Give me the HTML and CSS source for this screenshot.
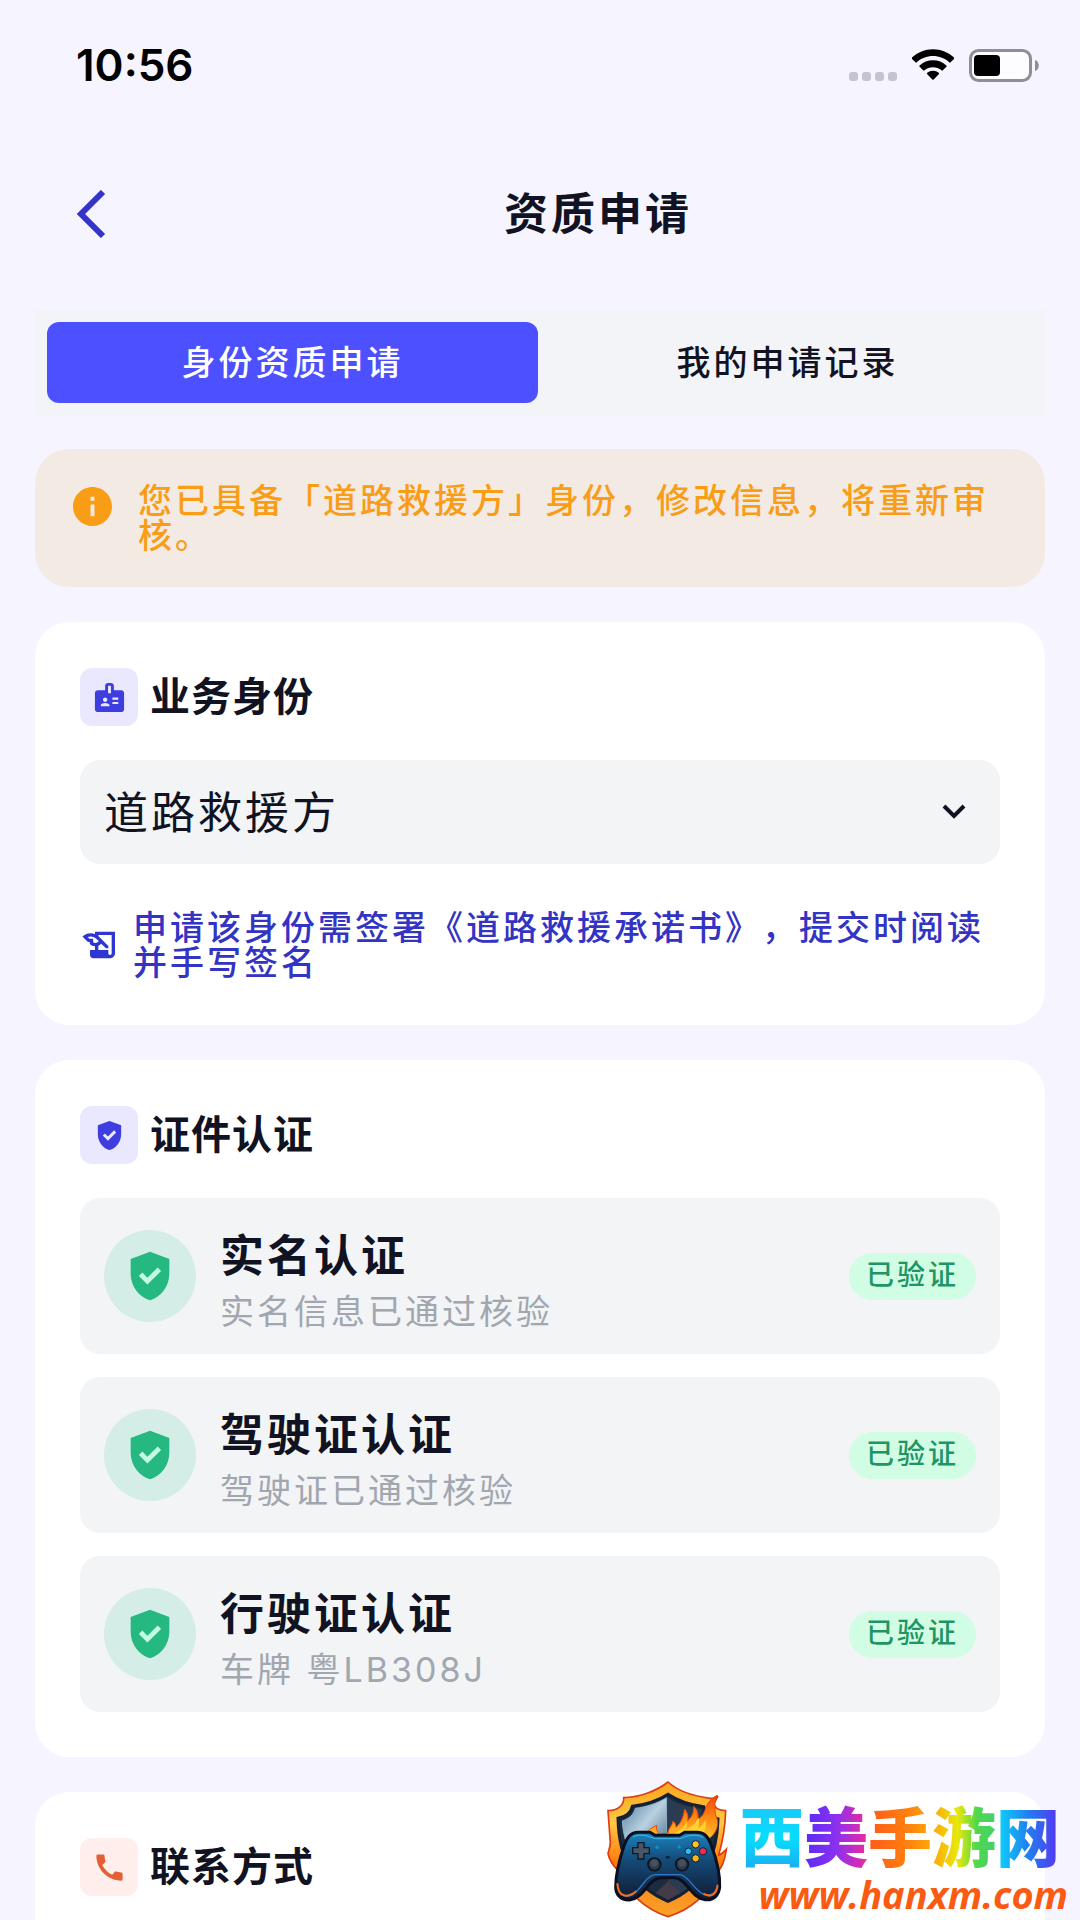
FILE: index.html
```html
<!DOCTYPE html>
<html lang="zh-CN">
<head>
	<meta charset="utf-8">
	<meta name="viewport" content="width=device-width, initial-scale=1.0">
	<title>资质申请</title>
	<link rel="stylesheet" href="styles.css">
</head>

<body>
<svg class="sprite" aria-hidden="true">
	<symbol id="icon-shield" viewBox="0 0 24 24">
		<path d="M12 2 4 5v6.09c0 5.05 3.41 9.76 8 10.91 4.59-1.15 8-5.86 8-10.91V5l-8-3zm-1.06 13.54L7.4 12l1.41-1.41 2.12 2.12 4.24-4.24 1.41 1.41-5.64 5.66z"/>
	</symbol>
</svg>
<div class="wrapper">
	<div class="status_bar">
		<span class="time">10:56</span>
		<div class="status_icons">
			<span class="signal"><i></i><i></i><i></i><i></i></span>
			<svg class="wifi" viewBox="0 0 44 33">
				<path d="M22 0C13.500 0 5.800 3.300 0 8.700a1 1 0 0 0 0 1.400l3.600 3.600a1 1 0 0 0 1.400 0C9.500 9.600 15.500 7.200 22 7.200s12.500 2.400 17 6.500a1 1 0 0 0 1.400 0l3.600-3.600a1 1 0 0 0 0-1.400C38.200 3.300 30.500 0 22 0z"/>
				<path d="M22 11.500c-5.400 0-10.300 2-14 5.400a1 1 0 0 0 0 1.500l3.700 3.700a1 1 0 0 0 1.400 0c2.400-2.100 5.500-3.300 8.900-3.300s6.500 1.200 8.900 3.300a1 1 0 0 0 1.400 0l3.700-3.700a1 1 0 0 0 0-1.500c-3.700-3.400-8.600-5.400-14-5.400z"/>
				<path d="M22 22.500c-2.300 0-4.400.8-6 2.200a1 1 0 0 0 0 1.500l5.300 5.400a1 1 0 0 0 1.400 0l5.300-5.400a1 1 0 0 0 0-1.500c-1.600-1.400-3.700-2.200-6-2.200z"/>
			</svg>
			<svg class="battery" viewBox="0 0 70 33">
				<rect x="1.500" y="1.500" width="60" height="30" rx="8" fill="#fdfdff" stroke="#8f8d97" stroke-width="3"/>
				<rect x="5" y="6" width="26" height="21" rx="4"/>
				<path d="M66 11c5 1 5 10 0 11z" fill="#8f8d97"/>
			</svg>
		</div>
	</div>

	<header class="nav">
		<button type="button" class="back" aria-label="返回">
			<svg viewBox="0 0 30 48"><path d="M27 2 5 24l22 22"/></svg>
		</button>
		<h1>资质申请</h1>
	</header>

	<div class="tabs">
		<button type="button" class="tab on">身份资质申请</button>
		<button type="button" class="tab">我的申请记录</button>
	</div>

	<main class="content">
		<div class="notice">
			<svg viewBox="2 2 20 20"><path d="M12 2C6.480 2 2 6.480 2 12s4.480 10 10 10 10-4.480 10-10S17.520 2 12 2zm1 15h-2v-6h2v6zm0-8h-2V7h2v2z"/></svg>
			<p>您已具备「道路救援方」身份，修改信息，将重新审核。</p>
		</div>

		<section class="card">
			<div class="card_head">
				<span class="card_icon">
					<svg viewBox="0 0 24 24"><path d="M20 7h-5V4c0-1.100-.9-2-2-2h-2c-1.100 0-2 .9-2 2v3H4c-1.100 0-2 .9-2 2v11c0 1.100.9 2 2 2h16c1.100 0 2-.9 2-2V9c0-1.100-.9-2-2-2zM9 12c.83 0 1.500.67 1.500 1.500S9.830 15 9 15s-1.500-.67-1.500-1.500S8.170 12 9 12zm3 6H6v-.75c0-1 2-1.500 3-1.500s3 .5 3 1.500V18zm1-9h-2V4h2v5zm5 7.500h-4V15h4v1.500zm0-3h-4V12h4v1.500z"/></svg>
				</span>
				<h2><label for="identity">业务身份</label></h2>
			</div>
			<div class="select_box">
				<select id="identity">
					<option>道路救援方</option>
				</select>
				<svg viewBox="0 0 24 16"><path d="M2 3l10 10L22 3"/></svg>
			</div>
			<a href="#" class="terms">
				<svg viewBox="0 0 24 24"><path d="M9 4v1.380c-.83-.33-1.720-.5-2.610-.5-1.790 0-3.580.68-4.950 2.050l3.330 3.330h1.110v1.110c.86.86 1.980 1.310 3.110 1.360V15H6v3c0 1.100.9 2 2 2h10c1.660 0 3-1.340 3-3V4H9zm-1.110 6.410V8.260H5.610L4.570 7.220a5.070 5.070 0 0 1 1.820-.34c1.340 0 2.590.52 3.540 1.460l1.410 1.410-.2.2a2.700 2.700 0 0 1-1.920.8c-.47 0-.93-.12-1.330-.34zM19 17c0 .55-.45 1-1 1s-1-.45-1-1v-2h-6v-2.590c.57-.23 1.100-.57 1.560-1.030l.2-.2L15.590 14H17v-1.410l-6-5.970V6h8v11z"/></svg>
				<span>申请该身份需签署《道路救援承诺书》，提交时阅读并手写签名</span>
			</a>
		</section>

		<section class="card">
			<div class="card_head">
				<span class="card_icon"><svg><use href="#icon-shield"/></svg></span>
				<h2>证件认证</h2>
			</div>
			<ul class="cert_list">
				<li>
					<span class="cert_icon"><svg><use href="#icon-shield"/></svg></span>
					<div class="cert_text">
						<h3>实名认证</h3>
						<p>实名信息已通过核验</p>
					</div>
					<span class="badge">已验证</span>
				</li>
				<li>
					<span class="cert_icon"><svg><use href="#icon-shield"/></svg></span>
					<div class="cert_text">
						<h3>驾驶证认证</h3>
						<p>驾驶证已通过核验</p>
					</div>
					<span class="badge">已验证</span>
				</li>
				<li>
					<span class="cert_icon"><svg><use href="#icon-shield"/></svg></span>
					<div class="cert_text">
						<h3>行驶证认证</h3>
						<p>车牌 粤LB308J</p>
					</div>
					<span class="badge">已验证</span>
				</li>
			</ul>
		</section>

		<section class="card contact">
			<div class="card_head">
				<span class="card_icon phone">
					<svg viewBox="0 0 24 24"><path d="M20.010 15.380c-1.230 0-2.420-.2-3.530-.56-.35-.12-.74-.03-1.010.24l-1.570 1.970c-2.830-1.350-5.480-3.900-6.890-6.830l1.950-1.660c.27-.28.35-.67.24-1.020-.37-1.110-.56-2.300-.56-3.530 0-.54-.45-.99-.99-.99H4.190C3.650 3 3 3.240 3 3.990 3 13.280 10.730 21 20.010 21c.71 0 .99-.63.99-1.180v-3.450c0-.54-.45-.99-.99-.99z"/></svg>
				</span>
				<h2>联系方式</h2>
			</div>
		</section>
	</main>

	<div class="site_mark">
		<svg viewBox="0 0 450 450">
			<defs>
				<linearGradient id="gold" x1="0" y1="0" x2="0" y2="1">
					<stop offset="0" stop-color="#f9a61c"/>
					<stop offset=".3" stop-color="#ffc845"/>
					<stop offset=".6" stop-color="#ff7a0d"/>
					<stop offset="1" stop-color="#f9a22b"/>
				</linearGradient>
				<linearGradient id="steel" x1="0" y1="0" x2="1" y2="1">
					<stop offset="0" stop-color="#4f7797"/>
					<stop offset=".5" stop-color="#b9d2e2"/>
					<stop offset="1" stop-color="#48657c"/>
				</linearGradient>
				<linearGradient id="fire" x1="0" y1="0" x2="0" y2="1">
					<stop offset="0" stop-color="#f0460c"/>
					<stop offset=".5" stop-color="#ff8a13"/>
					<stop offset="1" stop-color="#ffd034"/>
				</linearGradient>
				<linearGradient id="pad" x1="0" y1="0" x2="0" y2="1">
					<stop offset="0" stop-color="#1b84bf"/>
					<stop offset=".4" stop-color="#144b78"/>
					<stop offset="1" stop-color="#111b31"/>
				</linearGradient>
			</defs>
			<!-- shield -->
			<path d="M234 36C202 62 148 82 101 83c2 22-17 38-47 39l7 95c-1 17-5 25-7 34 4 22 16 37 32 53 25 62 76 113 148 136 71-22 121-70 147-132 16-16 24-38 28-70-9 10-16 15-23 18 12-43 20-92 21-134-20-1-34-9-35-22l12-22c-7 5-15 8-22 7-47-6-98-21-128-49z" fill="url(#gold)" stroke="#df3c12" stroke-width="5"/>
			<path d="M234 73c-31 20-65 31-107 36-4 18-20 32-43 36 2 112 44 206 150 249 104-42 148-136 150-247-22-6-38-18-43-37-43-5-77-17-107-37z" fill="#1c2b3f" stroke="#152033" stroke-width="9"/>
			<path d="M230 83c-29 17-58 27-94 32-5 19-18 31-39 38 2 36 10 64 22 92h111z" fill="url(#steel)" stroke="#8fb5cf" stroke-width="3"/>
			<path d="M234 84v305c44-18 82-48 104-88l-4-184c-40-5-71-15-100-33z" fill="#2c3c50"/>
			<path d="m234 334-37 35 37 20 36-20z" fill="#443b49"/>
			<!-- flames -->
			<path d="M170 196c5-19 16-24 31-30-5 13 2 17 6 28l27-5c1-15 12-20 15-35 7 5 9 11 9 18 15-13 21-27 26-55 9 12 12 22 9 35 13-11 19-24 18-43 12 11 14 23 13 38 12-5 20-19 23-34 7-18 18-27 34-37-10 20-5 29-6 46-1 15 9 22 8 38-1 26-20 47-47 57l-28-24z" fill="url(#fire)" stroke="#e94a0c" stroke-width="3"/>
			<path d="M251 192c16-8 30-18 39-36 3 10 0 17-3 23 18-8 31-21 38-36 6 10-2 23 1 31 10-6 13-12 20-25 5 19-1 39-15 52z" fill="#ffd233"/>
			<!-- gamepad -->
			<path d="M145 187h35l15 9h74l15-9h36c25 0 35 14 45 42 16 44 26 82 24 122-2 27-20 41-43 38-29-3-43-30-62-49-12-13-21-17-34-17h-34c-14 0-24 5-35 17-20 22-34 47-62 50-25 2-42-15-42-39 0-38 10-79 25-123 10-27 20-41 43-41z" fill="url(#pad)" stroke="#0a101f" stroke-width="9"/>
			<path d="M129 201c23-11 41-4 67 5h73c25-10 52-16 70-3" fill="none" stroke="#43b9ed" stroke-width="3"/>
			<path d="M82 340c1 45 36 49 61 21 18-19 30-45 53-47h75c22 5 33 29 53 47 24 24 54 17 59-18" fill="none" stroke="#3278ca" stroke-width="4"/>
			<path d="M82 340c2 43 32 45 57 23M340 371c22 13 39 4 43-25" fill="none" stroke="#fa6b1a" stroke-width="6"/>
			<path d="M144 218h18v15h16v18h-16v16h-18v-16h-16v-18h16z" fill="#4a5665" stroke="#101722" stroke-width="4"/>
			<circle cx="193" cy="283" r="19" fill="#303949" stroke="#0c121e" stroke-width="5"/>
			<circle cx="276" cy="283" r="19" fill="#303949" stroke="#0c121e" stroke-width="5"/>
			<circle cx="193" cy="279" r="11" fill="#465061"/>
			<circle cx="276" cy="279" r="11" fill="#465061"/>
			<circle cx="201" cy="232" r="5" fill="#188ecb"/>
			<circle cx="268" cy="231" r="5" fill="#188ecb"/>
			<ellipse cx="233" cy="262" rx="7" ry="4" fill="#0d2239"/>
			<g stroke="#15213a" stroke-width="3">
				<circle cx="317" cy="223" r="11" fill="#ffc222"/>
				<circle cx="295" cy="244" r="10" fill="#23bff2"/>
				<circle cx="339" cy="244" r="11" fill="#f02a50"/>
				<circle cx="317" cy="265" r="11" fill="#f5b91f"/>
			</g>
		</svg>
		<div class="mark_text">
			<strong><span class="c1">西</span><span class="c2">美</span><span class="c3">手</span><span class="c4">游</span><span class="c5">网</span></strong>
			<em>www.hanxm.com</em>
		</div>
	</div>
</div>
</body>
</html>
```
FILE: styles.css
```css
* {
	box-sizing: border-box;
}
body, h1, h2, h3, p, ul {
	margin: 0;
	padding: 0;
}
ul {
	list-style: none;
}
a {
	text-decoration: none;
}
button, select {
	margin: 0;
	padding: 0;
	border: 0;
	background: none;
	color: inherit;
	font: inherit;
	letter-spacing: inherit;
}
svg {
	display: block;
	flex: none;
}
body {
	background-color: #f6f4ff;
	color: #111322;
	font-family: Inter, "Noto Sans CJK SC", sans-serif;
	font-size: 34px;
	letter-spacing: 3px;
	text-spacing-trim: space-all;
}
.sprite {
	position: absolute;
	width: 0;
	height: 0;
}
.wrapper {
	display: flex;
	position: relative;
	flex-direction: column;
	height: 100vh;
	overflow: hidden;
}

/* status bar */
.status_bar {
	display: flex;
	flex: none;
	align-items: center;
	justify-content: space-between;
	height: 130px;
	padding: 0 41px 0 76px;
}
.status_bar .time {
	color: #000;
	font-size: 44px;
	font-weight: 600;
	letter-spacing: 0;
}
.status_icons {
	display: flex;
	align-items: center;
	gap: 15px;
}
.signal {
	display: flex;
	align-self: flex-end;
	gap: 4px;
	padding-bottom: 1px;
}
.signal i {
	width: 9px;
	height: 9px;
	border-radius: 3px;
	background-color: #c6c3d0;
}
.wifi {
	width: 42px;
	height: 32px;
}
.battery {
	width: 70px;
	height: 33px;
}

/* title */
.nav {
	display: flex;
	flex: none;
	align-items: center;
	height: 168px;
	padding: 0 35px;
}
.nav .back {
	width: 116px;
	padding-left: 41px;
	cursor: pointer;
}
.nav .back svg {
	width: 30px;
	height: 48px;
	fill: none;
	stroke: #3434c8;
	stroke-width: 6;
}
.nav h1 {
	flex: 1;
	font-size: 44px;
	font-weight: 700;
	line-height: 66px;
	text-align: center;
}

/* tabs */
.tabs {
	display: flex;
	flex: none;
	gap: 4px;
	margin: 12px 35px 0;
	padding: 12px;
	background-color: #f2f4f7;
}
.tab {
	flex: 1;
	height: 81px;
	padding-bottom: 4px;
	border-radius: 12px;
	font-weight: 500;
	cursor: pointer;
}
.tab.on {
	background-color: #4d50ff;
	color: #fff;
}

.content {
	display: flex;
	flex: 1;
	flex-direction: column;
	gap: 35px;
	min-height: 0;
	padding: 34px 35px 0;
	overflow-y: auto;
	scrollbar-width: none;
}
.notice {
	display: flex;
	flex: none;
	align-items: flex-start;
	gap: 26px;
	padding: 34px 20px 34px 38px;
	border-radius: 34px;
	background-color: #f4eae4;
	color: #f99d17;
	font-weight: 500;
	line-height: 35px;
}
.notice svg {
	width: 39px;
	height: 39px;
	margin-top: 4px;
	fill: #f99d17;
}

/* cards */
.card {
	flex: none;
	padding: 46px 45px 45px;
	border-radius: 34px;
	background-color: #fff;
}
.contact {
	min-height: 240px;
}
.card_head {
	display: flex;
	align-items: center;
	gap: 12px;
}
.card_head h2 {
	font-size: 40px;
	font-weight: 700;
	letter-spacing: 1px;
	line-height: 58px;
}
.card_icon {
	display: flex;
	align-items: center;
	justify-content: center;
	width: 58px;
	height: 58px;
	border-radius: 12px;
	background-color: #eae8ff;
	fill: #3d3de0;
}
.card_icon svg {
	width: 35px;
	height: 35px;
}
.card_icon.phone {
	background-color: #ffeeeb;
	fill: #e26036;
}
.select_box {
	position: relative;
	margin-top: 34px;
}
.select_box select {
	width: 100%;
	height: 104px;
	padding: 2px 24px 0;
	border-radius: 20px;
	background-color: #f2f4f6;
	font-size: 44px;
	appearance: none;
}
.select_box svg {
	position: absolute;
	top: 43px;
	right: 34px;
	width: 24px;
	height: 16px;
	fill: none;
	stroke: #111322;
	stroke-width: 4;
	pointer-events: none;
}
.terms {
	display: flex;
	align-items: center;
	gap: 13px;
	margin-top: 46px;
	color: #3333c4;
	font-weight: 500;
	line-height: 35px;
}
.terms svg {
	width: 40px;
	height: 40px;
	fill: #2f35d0;
}

/* certificates */
.cert_list {
	display: flex;
	flex-direction: column;
	gap: 23px;
	margin-top: 34px;
}
.cert_list li {
	display: flex;
	align-items: center;
	gap: 24px;
	height: 156px;
	padding: 0 24px;
	border-radius: 20px;
	background-color: #f2f4f6;
}
.cert_icon {
	display: flex;
	flex: none;
	align-items: center;
	justify-content: center;
	width: 92px;
	height: 92px;
	border-radius: 50%;
	background-color: #d4ede6;
}
.cert_icon svg {
	width: 58px;
	height: 58px;
	/* shows through the tick */
	background: radial-gradient(#c5fbe0 12px, transparent 13px);
	fill: #25b881;
}
.cert_text {
	flex: 1;
}
.cert_text h3 {
	font-size: 44px;
	font-weight: 700;
	line-height: 66px;
}
.cert_text p {
	margin-top: 6px;
	color: #a1a6af;
	line-height: 34px;
}
.badge {
	height: 47px;
	padding: 0 17px;
	border-radius: 24px;
	background-color: #d0fde3;
	color: #1f9565;
	font-size: 28px;
	font-weight: 500;
	line-height: 44px;
}

/* site mark */
.site_mark {
	display: flex;
	position: absolute;
	right: 12px;
	bottom: 0;
}
.site_mark svg {
	width: 150px;
	height: 150px;
}
.mark_text {
	display: flex;
	flex-direction: column;
	padding-top: 32px;
	letter-spacing: 0;
}
.mark_text strong {
	display: flex;
	padding-right: 8px;
	font-size: 64px;
	font-weight: 900;
	line-height: 72px;
}
.mark_text span {
	background-clip: text;
	-webkit-background-clip: text;
	color: transparent;
}
.mark_text .c1 {
	background-image: linear-gradient(#1cc8fb, #08dcfb 50%, #1da6f0);
}
.mark_text .c2 {
	background-image: linear-gradient(90deg, #5a2cf5, #8a30f0 50%, #f02a9c);
}
.mark_text .c3 {
	background-image: linear-gradient(90deg, #ff5a1a, #ff7f10 60%, #ffa808);
}
.mark_text .c4 {
	background-image: linear-gradient(90deg, #ffa50a, #e8e80a 40%, #50d84c 70%, #44d070);
}
.mark_text .c5 {
	background-image: linear-gradient(90deg, #0cd8fb, #2080f0 50%, #5a30f0);
}
.mark_text em {
	color: #fa5a12;
	font-family: "Open Sans", "Noto Sans", sans-serif;
	font-size: 38px;
	font-weight: 700;
	line-height: 40px;
	text-align: right;
}
```
